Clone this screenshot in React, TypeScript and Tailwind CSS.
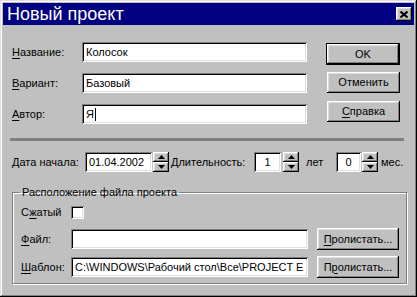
import React from 'react'

const raised =
  'bg-[#c0c0c0] shadow-[inset_-1px_-1px_0_#000,inset_1px_1px_0_#fff,inset_-2px_-2px_0_#808080,inset_2px_2px_0_#dfdfdf]'
const sunken =
  'bg-white shadow-[inset_1px_1px_0_#808080,inset_-1px_-1px_0_#fff,inset_2px_2px_0_#000,inset_-2px_-2px_0_#dfdfdf]'

const Acc = ({ c }: { c: string }) => <span className="underline underline-offset-[2px]">{c}</span>

const Edit = ({ w, children, center }: { w: string; children?: React.ReactNode; center?: boolean }) => (
  <div className={`${sunken} ${w} h-[20px] flex items-center overflow-hidden whitespace-nowrap ${center ? 'justify-center' : 'pl-[4px]'}`}>
    {children}
  </div>
)

const Btn = ({ children, def, cls }: { children: React.ReactNode; def?: boolean; cls?: string }) =>
  def ? (
    <div className={`border border-black ${cls}`}>
      <div className={`${raised} h-full flex items-center justify-center`}>{children}</div>
    </div>
  ) : (
    <div className={`${raised} flex items-center justify-center ${cls}`}>{children}</div>
  )

const Arrow = ({ up }: { up?: boolean }) => (
  <svg width="7" height="4" viewBox="0 0 7 4">
    <path d={up ? 'M3.5 0 L7 4 L0 4 Z' : 'M0 0 L7 0 L3.5 4 Z'} fill="#000" />
  </svg>
)

const Spin = ({ cls }: { cls?: string }) => (
  <div className={`flex flex-col w-[16px] h-[20px] ${cls}`}>
    <div className={`${raised} h-[10px] flex items-center justify-center`}>
      <Arrow up />
    </div>
    <div className={`${raised} h-[10px] flex items-center justify-center`}>
      <Arrow />
    </div>
  </div>
)

export default function App() {
  return (
    <div className="w-[417px] h-[297px] bg-[#c0c0c0] p-[3px] text-[11px] leading-[13px] text-black font-['Liberation_Sans',Arial,sans-serif] shadow-[inset_-1px_-1px_0_#000,inset_1px_1px_0_#dfdfdf,inset_-2px_-2px_0_#808080,inset_2px_2px_0_#fff]">
      {/* title bar */}
      <div className="h-[22px] bg-[#000080] flex items-center justify-between pl-[4px] pr-[2px]">
        <span className="text-white text-[18px] leading-[22px]">Новый проект</span>
        <div className={`${raised} w-[16px] h-[14px] flex items-center justify-center`}>
          <svg width="8" height="7" viewBox="0 0 8 7">
            <path d="M0.5 0.5 L7.5 6.5 M7.5 0.5 L0.5 6.5" stroke="#000" strokeWidth="2" />
          </svg>
        </div>
      </div>

      <div className="px-[7px]">
        {/* name / variant / author + buttons */}
        <div className="flex pl-[2px] pt-[17px]">
          <div className="flex flex-col gap-[11px]">
            <div className="flex items-center h-[20px]">
              <span className="w-[70px]"><Acc c="Н" />азвание:</span>
              <Edit w="w-[225px]">Колосок</Edit>
            </div>
            <div className="flex items-center h-[20px]">
              <span className="w-[70px]"><Acc c="В" />ариант:</span>
              <Edit w="w-[225px]">Базовый</Edit>
            </div>
            <div className="flex items-center h-[20px]">
              <span className="w-[70px]"><Acc c="А" />втор:</span>
              <Edit w="w-[225px]">
                Я<span className="w-[1px] h-[13px] bg-black ml-[1px]" />
              </Edit>
            </div>
          </div>
          <div className="flex flex-col ml-[19px] mt-[1px]">
            <Btn def cls="w-[74px] h-[22px]">OK</Btn>
            <Btn cls="w-[73px] h-[21px] mt-[7px] ml-[1px]">Отменить</Btn>
            <Btn cls="w-[73px] h-[21px] mt-[8px] ml-[1px]"><span><Acc c="С" />правка</span></Btn>
          </div>
        </div>

        <div className="h-[3px] w-[394px] bg-[#808080] mt-[14px]" />

        {/* dates */}
        <div className="flex items-center pl-[2px] mt-[11px] h-[20px]">
          <span className="w-[73px]"><Acc c="Д" />ата начала:</span>
          <Edit w="w-[67px]">01.04.2002</Edit>
          <Spin cls="ml-[1px]" />
          <span className="w-[83px] ml-[2px]"><Acc c="Д" />лительность:</span>
          <Edit w="w-[27px]" center>1</Edit>
          <Spin cls="ml-[2px]" />
          <span className="w-[30px] ml-[7px]">лет</span>
          <Edit w="w-[25px]" center>0</Edit>
          <Spin cls="ml-[1px]" />
          <span className="ml-[3px]">мес.</span>
        </div>

        {/* file location group */}
        <fieldset className="ml-[2px] mt-[14px] w-[395px] h-[98px] border border-[#808080] shadow-[1px_1px_0_#fff,inset_1px_1px_0_#fff] pl-[8px]">
          <legend className="px-[2px] ml-[-1px]">Расположение файла проекта</legend>
          <div className="flex items-center h-[13px] mt-[7px]">
            <span className="w-[50px]">С<Acc c="ж" />атый</span>
            <div className={`${sunken} w-[13px] h-[13px]`} />
          </div>
          <div className="flex items-center h-[22px] mt-[9px]">
            <span className="w-[50px]"><Acc c="Ф" />айл:</span>
            <Edit w="w-[237px]" />
            <Btn cls="w-[82px] h-[22px] ml-[9px]"><span><Acc c="П" />ролистать...</span></Btn>
          </div>
          <div className="flex items-center h-[22px] mt-[6px]">
            <span className="w-[50px]"><Acc c="Ш" />аблон:</span>
            <Edit w="w-[237px]">C:\WINDOWS\Рабочий стол\Все\PROJECT E</Edit>
            <Btn cls="w-[82px] h-[22px] ml-[9px]"><span>П<Acc c="р" />олистать...</span></Btn>
          </div>
        </fieldset>
      </div>
    </div>
  )
}
